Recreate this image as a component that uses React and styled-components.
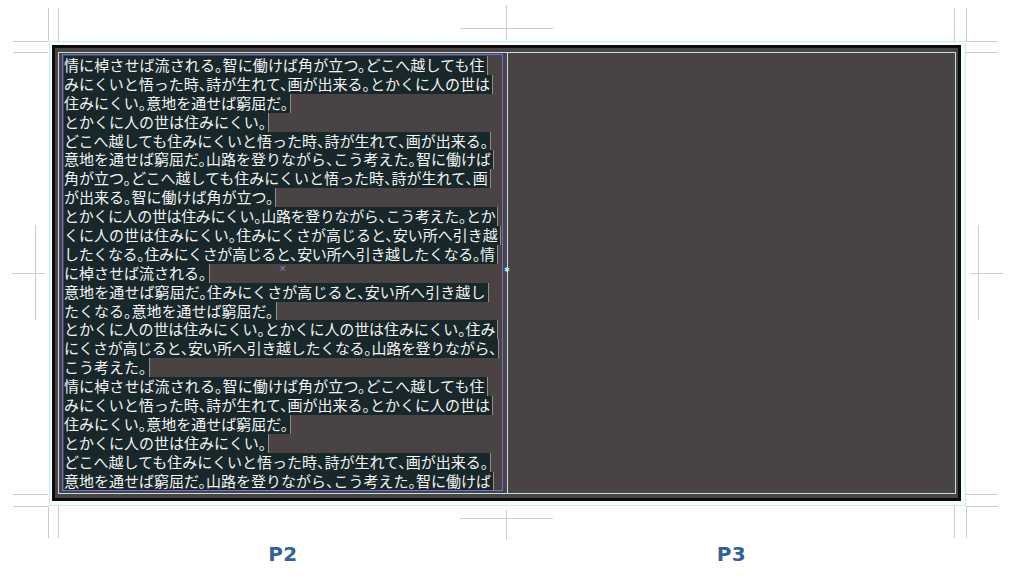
import React from 'react';
import styled, { createGlobalStyle } from 'styled-components';

const GlobalStyle = createGlobalStyle`
  html, body {
    margin: 0;
    padding: 0;
    background: #ffffff;
  }
`;

const lines = [
  ['情に棹させば流される。智に働けば角が立つ。どこへ越しても住', 0.1],
  ['みにくいと悟った時、詩が生れて、画が出来る。とかくに人の世は', 0],
  ['住みにくい。意地を通せば窮屈だ。', 0],
  ['とかくに人の世は住みにくい。', 0],
  ['どこへ越しても住みにくいと悟った時、詩が生れて、画が出来る。', 0],
  ['意地を通せば窮屈だ。山路を登りながら、こう考えた。智に働けば', 0],
  ['角が立つ。どこへ越しても住みにくいと悟った時、詩が生れて、画', 0],
  ['が出来る。智に働けば角が立つ。', 0],
  ['とかくに人の世は住みにくい。山路を登りながら、こう考えた。とか', -0.35],
  ['くに人の世は住みにくい。住みにくさが高じると、安い所へ引き越', 0],
  ['したくなる。住みにくさが高じると、安い所へ引き越したくなる。情', -0.35],
  ['に棹させば流される。', 0],
  ['意地を通せば窮屈だ。住みにくさが高じると、安い所へ引き越し', 0.1],
  ['たくなる。意地を通せば窮屈だ。', 0],
  ['とかくに人の世は住みにくい。とかくに人の世は住みにくい。住み', -0.1],
  ['にくさが高じると、安い所へ引き越したくなる。山路を登りながら、', -0.3],
  ['こう考えた。', 0],
  ['情に棹させば流される。智に働けば角が立つ。どこへ越しても住', 0.1],
  ['みにくいと悟った時、詩が生れて、画が出来る。とかくに人の世は', 0],
  ['住みにくい。意地を通せば窮屈だ。', 0],
  ['とかくに人の世は住みにくい。', 0],
  ['どこへ越しても住みにくいと悟った時、詩が生れて、画が出来る。', 0],
  ['意地を通せば窮屈だ。山路を登りながら、こう考えた。智に働けば', 0],
];

// crop / registration marks around the spread: [x1, y1, x2, y2]
const marks = [
  // top left
  [48.5, 8, 48.5, 41], [58.5, 8, 58.5, 41], [13, 41.5, 48, 41.5], [13, 52.5, 48, 52.5],
  // top right
  [954.5, 8, 954.5, 41], [966.5, 8, 966.5, 41], [966, 41.5, 998, 41.5], [966, 52.5, 998, 52.5],
  // bottom left
  [48.5, 506, 48.5, 538], [58.5, 506, 58.5, 538], [13, 494.5, 48, 494.5], [13, 506.5, 48, 506.5],
  // bottom right
  [954.5, 506, 954.5, 538], [966.5, 506, 966.5, 538], [966, 494.5, 998, 494.5], [966, 506.5, 998, 506.5],
  // centre top / bottom
  [506.5, 5, 506.5, 40], [460, 28.5, 553, 28.5],
  [506.5, 510, 506.5, 540], [460, 518.5, 553, 518.5],
  // centre left / right
  [35.5, 225, 35.5, 320], [12, 273.5, 45, 273.5],
  [978.5, 225, 978.5, 320], [970, 273.5, 1003, 273.5],
];

const Stage = styled.div`
  position: relative;
  width: 1013px;
  height: 585px;
  overflow: hidden;
  box-sizing: border-box;
  padding: 41px 0 0 49px;
  background: #ffffff;
`;

const MarksLayer = styled.svg`
  position: absolute;
  inset: 0;
  pointer-events: none;
`;

const Bleed = styled.div`
  width: 917px;
  height: 465px;
  box-sizing: border-box;
  border: 1px solid #c6eef0;
  background: #f7fdfd;
  padding: 3px 4px 4px 2px;
`;

const Frame = styled.div`
  height: 100%;
  box-sizing: border-box;
  border: 3px solid #0d0d0d;
  background: #494443;
  padding: 4px 2px 4px 3px;
`;

const Trim = styled.div`
  height: 100%;
  box-sizing: border-box;
  border: 1px solid #b4e4e8;
  display: grid;
  grid-template-columns: 448px 1px 1fr;
`;

const Page = styled.div`
  padding: ${p => (p.$left ? '1px 0 0 3px' : '0')};
`;

const Spine = styled.div`
  position: relative;
  background: #b4e4e8;

  &::after {
    content: '✱';
    position: absolute;
    left: -3px;
    top: 214px;
    font: 7px/7px 'DejaVu Sans', sans-serif;
    color: #bfeef2;
  }
`;

const TextFrame = styled.div`
  position: relative;
  width: 441px;
  height: 437px;
  box-sizing: border-box;
  border: 1px solid #7a6ccf;
  padding: 1px;
  display: flex;
  flex-direction: column;
  align-items: flex-start;

  &::after {
    content: '×';
    position: absolute;
    left: 216px;
    top: 209px;
    font: 9px/9px 'DejaVu Sans', sans-serif;
    color: #9a7fd8;
  }
`;

const Line = styled.span`
  display: block;
  height: 18.9px;
  line-height: 18.9px;
  white-space: nowrap;
  font-family: 'Noto Sans CJK JP', 'Noto Sans', sans-serif;
  font-size: 15px;
  font-feature-settings: 'halt' 1;
  letter-spacing: ${p => p.$squeeze}px;
  color: #f3f3f3;
  background: #182729;
  padding-right: 2px;
  border-right: 1px solid #8e8e8e;
`;

const Labels = styled.div`
  display: grid;
  grid-template-columns: 448px 1px 447px;
  margin: 37px 0 0 10px;
`;

const Label = styled.div`
  text-align: center;
  font-family: 'DejaVu Sans', 'Liberation Sans', sans-serif;
  font-weight: 700;
  font-size: 20px;
  line-height: 22px;
  letter-spacing: 0.5px;
  color: #33629b;
`;

const App = () => (
  <>
    <GlobalStyle />
    <Stage>
      <Bleed>
        <Frame>
          <Trim>
            <Page $left>
              <TextFrame>
                {lines.map(([t, s], i) => (
                  <Line key={i} $squeeze={s}>{t}</Line>
                ))}
              </TextFrame>
            </Page>
            <Spine />
            <Page />
          </Trim>
        </Frame>
      </Bleed>
      <Labels>
        <Label>P2</Label>
        <span />
        <Label>P3</Label>
      </Labels>
      <MarksLayer width="1013" height="585" viewBox="0 0 1013 585">
        {marks.map(([x1, y1, x2, y2], i) => (
          <line key={i} x1={x1} y1={y1} x2={x2} y2={y2} stroke="#cccccc" strokeWidth="1" />
        ))}
      </MarksLayer>
    </Stage>
  </>
);

export default App;
